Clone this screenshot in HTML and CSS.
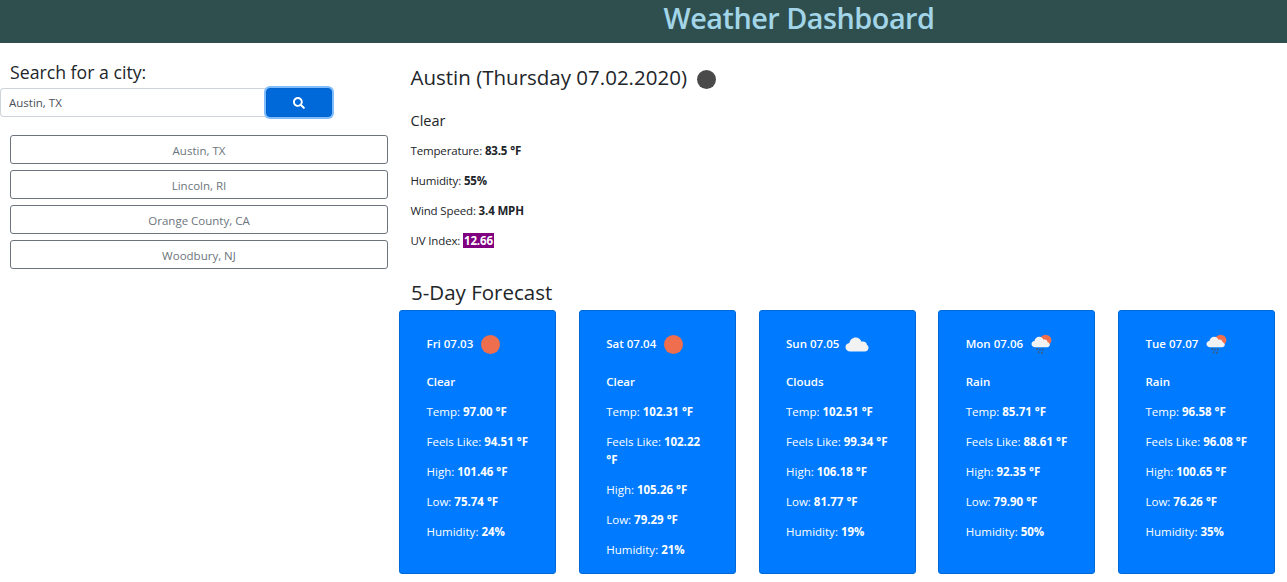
FILE: index.html
```html
<!DOCTYPE html>
<html lang="en">
<head>
<meta charset="utf-8">
<title>Weather Dashboard</title>
<link rel="stylesheet" href="styles.css">
</head>
<body>
<svg class="defs" width="0" height="0" aria-hidden="true">
  <defs>
    <symbol id="cloud" viewBox="0 0 24 16">
      <path d="M5.500 15.500C2.500 15.500.5 13.600.5 11.200c0-2.300 1.700-4 3.900-4.200C5 3.800 7.600 1.500 10.700 1.500c2.700 0 5 1.700 5.800 4.200.5-.2 1-.3 1.600-.3 2.100 0 3.700 1.500 3.900 3.500 1 .5 1.500 1.500 1.500 2.800 0 2.200-1.600 3.800-3.800 3.800z" fill="#f2f2f2"/>
    </symbol>
    <symbol id="rain" viewBox="0 0 24 24">
      <circle cx="16" cy="8" r="6.200" fill="#ee6e4d"/>
      <path d="M4.500 15.500C2.300 15.500.5 14 .5 12c0-1.800 1.400-3.200 3.200-3.400C4.200 6 6.300 4 8.900 4c2.200 0 4 1.300 4.700 3.400.4-.2.900-.2 1.300-.2 1.700 0 3 1.200 3.200 2.900 1.300.4 2.400 1.400 2.400 2.700 0 1.600-1.300 2.700-3 2.700z" fill="#f2f2f2"/>
      <g fill="#4a5560">
        <rect x="6" y="16.500" width="1.500" height="2"/><rect x="9" y="17" width="1.500" height="2"/><rect x="12" y="17" width="1.500" height="2"/>
        <rect x="7.500" y="20" width="1.500" height="2"/><rect x="11" y="20.500" width="1.500" height="2"/>
      </g>
    </symbol>
  </defs>
</svg>
<header class="site-header"><h1 class="site-title">Weather Dashboard</h1></header>
<main class="layout">
  <aside class="sidebar">
    <h2 class="search-label">Search for a city:</h2>
    <form class="search-row">
      <input class="search-input" type="text" value="Austin, TX">
      <button class="search-btn" type="button" aria-label="Search">
        <svg class="search-icon" viewBox="0 0 512 512"><path fill="#fff" d="M505 442.700L405.300 343c-4.500-4.500-10.600-7-17-7H372c27.600-35.300 44-79.700 44-128C416 93.100 322.900 0 208 0S0 93.100 0 208s93.100 208 208 208c48.300 0 92.700-16.400 128-44v16.300c0 6.400 2.500 12.500 7 17l99.700 99.700c9.400 9.400 24.600 9.400 33.900 0l28.300-28.300c9.400-9.400 9.400-24.600.1-34zM208 336c-70.700 0-128-57.200-128-128 0-70.700 57.200-128 128-128 70.700 0 128 57.200 128 128 0 70.700-57.200 128-128 128z"/></svg>
      </button>
    </form>
    <div class="history">
      <button class="city-btn" type="button">Austin, TX</button>
      <button class="city-btn" type="button">Lincoln, RI</button>
      <button class="city-btn" type="button">Orange County, CA</button>
      <button class="city-btn" type="button">Woodbury, NJ</button>
    </div>
  </aside>
  <section class="content">
    <div class="current">
      <h2 class="city-title">Austin (Thursday 07.02.2020) <span class="moon"></span></h2>
      <h3 class="condition">Clear</h3>
      <p class="stat">Temperature: <b>83.5 °F</b></p>
      <p class="stat">Humidity: <b>55%</b></p>
      <p class="stat">Wind Speed: <b>3.4 MPH</b></p>
      <p class="stat">UV Index: <b class="uv">12.66</b></p>
    </div>
    <h2 class="forecast-title">5-Day Forecast</h2>
    <div class="cards">
      <article class="card">
        <div class="card-head">Fri 07.03 <span class="sun"></span></div>
        <p class="card-cond">Clear</p>
        <p>Temp: <b>97.00 °F</b></p>
        <p>Feels Like: <b>94.51 °F</b></p>
        <p>High: <b>101.46 °F</b></p>
        <p>Low: <b>75.74 °F</b></p>
        <p>Humidity: <b>24%</b></p>
      </article>
      <article class="card">
        <div class="card-head">Sat 07.04 <span class="sun"></span></div>
        <p class="card-cond">Clear</p>
        <p>Temp: <b>102.31 °F</b></p>
        <p>Feels Like: <b>102.22 °F</b></p>
        <p>High: <b>105.26 °F</b></p>
        <p>Low: <b>79.29 °F</b></p>
        <p>Humidity: <b>21%</b></p>
      </article>
      <article class="card">
        <div class="card-head">Sun 07.05 <svg class="cloud-icon"><use href="#cloud"/></svg></div>
        <p class="card-cond">Clouds</p>
        <p>Temp: <b>102.51 °F</b></p>
        <p>Feels Like: <b>99.34 °F</b></p>
        <p>High: <b>106.18 °F</b></p>
        <p>Low: <b>81.77 °F</b></p>
        <p>Humidity: <b>19%</b></p>
      </article>
      <article class="card">
        <div class="card-head">Mon 07.06 <svg class="rain-icon"><use href="#rain"/></svg></div>
        <p class="card-cond">Rain</p>
        <p>Temp: <b>85.71 °F</b></p>
        <p>Feels Like: <b>88.61 °F</b></p>
        <p>High: <b>92.35 °F</b></p>
        <p>Low: <b>79.90 °F</b></p>
        <p>Humidity: <b>50%</b></p>
      </article>
      <article class="card">
        <div class="card-head">Tue 07.07 <svg class="rain-icon"><use href="#rain"/></svg></div>
        <p class="card-cond">Rain</p>
        <p>Temp: <b>96.58 °F</b></p>
        <p>Feels Like: <b>96.08 °F</b></p>
        <p>High: <b>100.65 °F</b></p>
        <p>Low: <b>76.26 °F</b></p>
        <p>Humidity: <b>35%</b></p>
      </article>
    </div>
  </section>
</main>
</body>
</html>
```
FILE: styles.css
```css
* { box-sizing: border-box; }
html, body { margin: 0; padding: 0; }
body {
  font-family: "Open Sans", "Noto Sans", sans-serif;
  color: #212529;
  background: #fff;
  height: 582px;
  overflow: hidden;
}
.defs { position: absolute; }
.site-header {
  height: 43px;
  background: #2f4f4f;
  padding-left: 311px;
  text-align: center;
}
.site-title {
  margin: 0;
  font-size: 28.800px;
  line-height: 35px;
  letter-spacing: -0.5px;
  font-weight: 600;
  color: #a3d5e8;
}
.layout { display: flex; }
.sidebar { width: 399px; flex: none; padding-top: 18px; }
.search-label {
  margin: 0 0 5px 10px;
  font-size: 17.700px;
  line-height: 22px;
  font-weight: 500;
}
.search-row { display: flex; align-items: center; }
.search-input {
  width: 266px;
  height: 29px;
  border: 1px solid #ced4da;
  border-right: 0;
  border-radius: 4px 0 0 4px;
  padding: 0 8px;
  font: 11.500px "Open Sans", sans-serif;
  color: #495057;
}
.search-btn {
  width: 66px;
  height: 29px;
  background: #0069d9;
  border: 1px solid #0062cc;
  border-radius: 4px;
  box-shadow: 0 0 0 2px #80bdff;
  display: flex;
  align-items: center;
  justify-content: center;
  padding: 0;
}
.search-icon { width: 12px; height: 12px; }
.history { display: flex; flex-direction: column; gap: 6px; margin: 18px 11px 0 10px; }
.city-btn {
  height: 29px;
  background: #fff;
  border: 1px solid #6c757d;
  border-radius: 3px;
  color: #6c757d;
  font: 11.500px "Open Sans", sans-serif;
  padding: 2px 0 0;
}
.content { flex: 1; min-width: 0; padding-right: 12px; }
.current { padding: 21px 0 0 11.500px; }
.city-title {
  margin: 0 0 21px;
  font-size: 20.500px;
  line-height: 26px;
  font-weight: 500;
  display: flex;
  align-items: center;
  gap: 9px;
}
.moon { width: 19px; height: 19px; border-radius: 50%; background: #4a4a4a; margin-top: 5px; margin-left: 1px; }
.condition { margin: 0 0 11px; font-size: 14.500px; line-height: 20px; font-weight: 500; }
.stat { margin: 0 0 12px; font-size: 11.500px; line-height: 18px; letter-spacing: -0.15px; }
.uv { background: #800080; color: #fff; padding: 0 1px; }
.forecast-title {
  margin: 29px 0 5px 12px;
  font-size: 20.500px;
  line-height: 26px;
  font-weight: 500;
}
.cards { display: flex; justify-content: space-between; align-items: stretch; }
.card {
  width: 157px;
  background: #007bff;
  border: 1px solid #0069d9;
  border-radius: 3px;
  color: #fff;
  padding: 17px 23.500px 2px 26.500px;
  font-size: 11.500px;
  line-height: 18px;
}
.card p { margin: 0 0 12px; }
.card-head { display: flex; align-items: center; gap: 8px; height: 32px; margin-bottom: 13px; font-weight: 600; }
.card-cond { font-weight: 600; }
.sun { width: 19px; height: 19px; border-radius: 50%; background: #ee6e4d; }
.cloud-icon { width: 24px; height: 16px; margin-left: -2px; }
.rain-icon { width: 22px; height: 22px; }
```
